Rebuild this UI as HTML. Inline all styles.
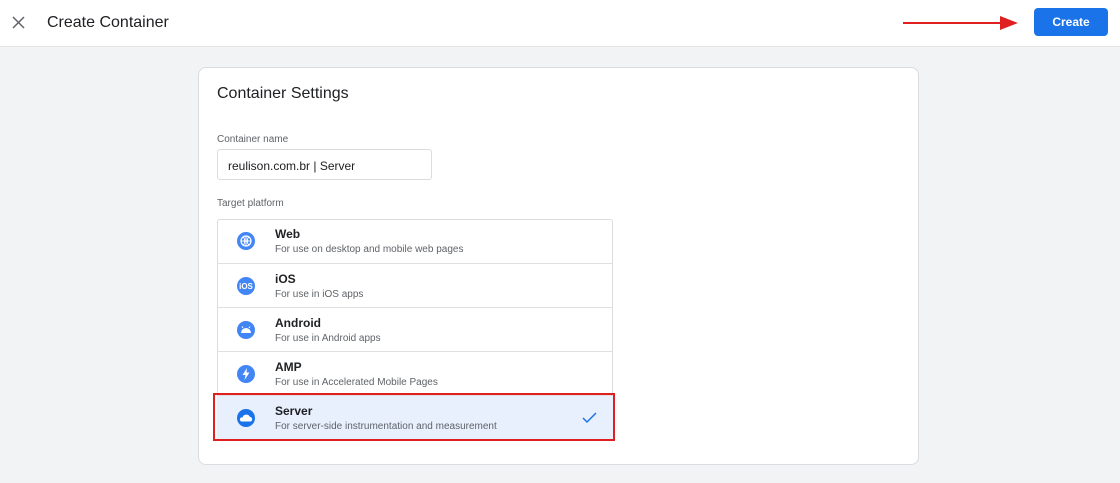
<!DOCTYPE html><html><head><style>
body{margin:0;width:1120px;height:483px;background:#f1f3f4;font-family:"Liberation Sans",Arial,sans-serif;position:relative;overflow:hidden}
.hdr{position:absolute;left:0;top:0;width:1120px;height:46px;background:#fff;border-bottom:1px solid #e3e3e3}
.title{position:absolute;left:47px;top:14px;font-size:16px;color:#202124}
.btn{position:absolute;left:1034px;top:8px;width:74px;height:28px;background:#1a73e8;border-radius:4px;color:#fff;font-size:12px;font-weight:bold;text-align:center;line-height:28px}
.card{position:absolute;left:198px;top:67px;width:721px;height:398px;background:#fff;border:1px solid #dadce0;border-radius:8px;box-sizing:border-box}
.lbl{position:absolute;font-size:10px;color:#5f6368}
.inp{position:absolute;left:217px;top:149px;width:215px;height:31px;border:1px solid #dadce0;border-radius:3px;box-sizing:border-box;font-size:12px;color:#202124;padding:9px 10px}
.list{position:absolute;left:217px;top:219px;width:396px;height:222px;border:1px solid #dadce0;border-radius:3px;box-sizing:border-box}
.row{position:absolute;left:217px;width:396px;height:44px;border-top:1px solid #e0e0e0;box-sizing:border-box}
.row svg.ic{position:absolute;left:20px;top:13px}
.row .t{position:absolute;left:58px;top:8px;font-size:12px;font-weight:bold;color:#202124}
.row .s{position:absolute;left:58px;top:25px;font-size:10px;color:#5f6368}
</style></head><body>
<div class="hdr">
<svg style="position:absolute;left:12px;top:16px" width="13" height="13"><path d="M1 1L12 12M12 1L1 12" stroke="#5f6368" stroke-width="1.5"/></svg>
<div class="title">Create Container</div>
<svg style="position:absolute;left:900px;top:14px" width="122" height="18"><path d="M3 9H100" stroke="#e02020" stroke-width="2"/><path d="M100 2L118 9L100 16Z" fill="#e02020"/></svg>
<div class="btn">Create</div>
</div>
<div class="card"></div>
<div style="position:absolute;left:217px;top:85px;font-size:16px;color:#202124">Container Settings</div>
<div class="lbl" style="left:217px;top:134px">Container name</div>
<div class="inp">reulison.com.br | Server</div>
<div class="lbl" style="left:217px;top:198px">Target platform</div>
<div class="list"></div>
<div class="row" style="top:219px;border-top:none"><svg class="ic" width="18" height="18"><circle cx="9" cy="9" r="9" fill="#4285f4"/><circle cx="9" cy="9" r="5" fill="none" stroke="#fff" stroke-width="1.2"/><path d="M4 9H14M9 4V14M6.5 5Q9 9 6.5 13M11.5 5Q9 9 11.5 13" stroke="#fff" stroke-width="1" fill="none"/></svg><div class="t">Web</div><div class="s">For use on desktop and mobile web pages</div></div>
<div class="row" style="top:263px"><svg class="ic" width="18" height="18"><circle cx="9" cy="9" r="9" fill="#4285f4"/><text x="9" y="12" font-size="8" font-weight="bold" fill="#fff" text-anchor="middle" font-family="Liberation Sans">iOS</text></svg><div class="t">iOS</div><div class="s">For use in iOS apps</div></div>
<div class="row" style="top:307px"><svg class="ic" width="18" height="18"><circle cx="9" cy="9" r="9" fill="#4285f4"/><path d="M4 12A5 5 0 0 1 14 12Z" fill="#fff"/><path d="M6 7L5 5.5M12 7L13 5.5" stroke="#fff" stroke-width="1"/></svg><div class="t">Android</div><div class="s">For use in Android apps</div></div>
<div class="row" style="top:351px"><svg class="ic" width="18" height="18"><circle cx="9" cy="9" r="9" fill="#4285f4"/><path d="M10 3L5.5 10H8.5L7.5 15L12.5 7.5H9.5Z" fill="#fff"/></svg><div class="t">AMP</div><div class="s">For use in Accelerated Mobile Pages</div></div>
<div class="row" style="top:395px;background:#e8f0fe;height:45px"><svg class="ic" width="18" height="18"><circle cx="9" cy="9" r="9" fill="#1a73e8"/><path d="M4.5 12.5H13.5A2.3 2.3 0 0 0 13 8A4 4 0 0 0 5.5 8.5A2 2 0 0 0 4.5 12.5Z" fill="#fff"/></svg><div class="t">Server</div><div class="s">For server-side instrumentation and measurement</div>
<svg style="position:absolute;left:365px;top:16px" width="15" height="12"><path d="M1 6L5 10L14 1" stroke="#1a73e8" stroke-width="1.5" fill="none"/></svg></div>
<div style="position:absolute;left:213px;top:393px;width:402px;height:48px;border:2px solid #e02020;box-sizing:border-box"></div>
</body></html>
